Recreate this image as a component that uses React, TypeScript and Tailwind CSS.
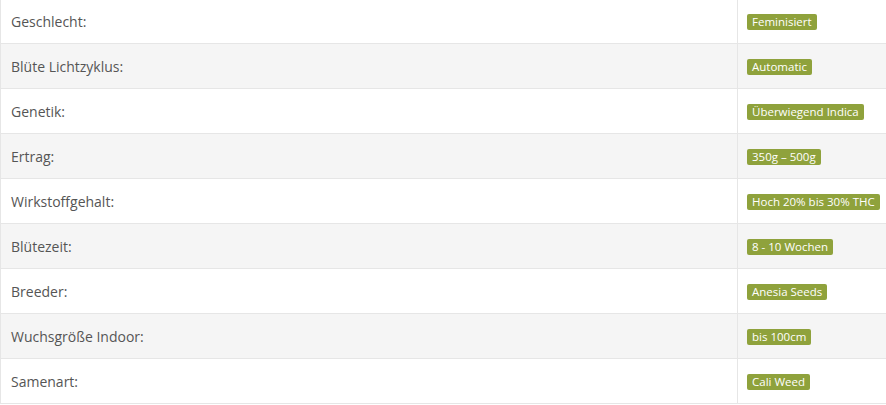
import React from "react";

const rows: [string, string][] = [
  ["Geschlecht:", "Feminisiert"],
  ["Blüte Lichtzyklus:", "Automatic"],
  ["Genetik:", "Überwiegend Indica"],
  ["Ertrag:", "350g – 500g"],
  ["Wirkstoffgehalt:", "Hoch 20% bis 30% THC"],
  ["Blütezeit:", "8 - 10 Wochen"],
  ["Breeder:", "Anesia Seeds"],
  ["Wuchsgröße Indoor:", "bis 100cm"],
  ["Samenart:", "Cali Weed"],
];

export default function App() {
  return (
    <div
      className="w-[886px] h-[405px] overflow-hidden bg-white"
      style={{ fontFamily: '"Open Sans", "Liberation Sans", sans-serif' }}
    >
      <div className="flex flex-col border-l border-[#e6e6e6]">
        {rows.map(([label, value], i) => (
          <div
            key={label}
            className={`flex border-b border-[#e6e6e6] ${i === 0 ? "h-[44px]" : "h-[45px]"} ${i % 2 === 1 ? "bg-[#f5f5f5]" : "bg-white"}`}
          >
            <div className="w-[737px] shrink-0 flex items-center pl-[10px] text-[14px] text-[#555555] border-r border-[#e6e6e6]">
              {label}
            </div>
            <div className="flex-1 flex items-center pl-[9px]">
              <span className="inline-flex items-center h-[16px] mt-px px-[5px] rounded-[2px] bg-[#8fa23c] text-white text-[11.5px] leading-none">
                {value}
              </span>
            </div>
          </div>
        ))}
      </div>
    </div>
  );
}
